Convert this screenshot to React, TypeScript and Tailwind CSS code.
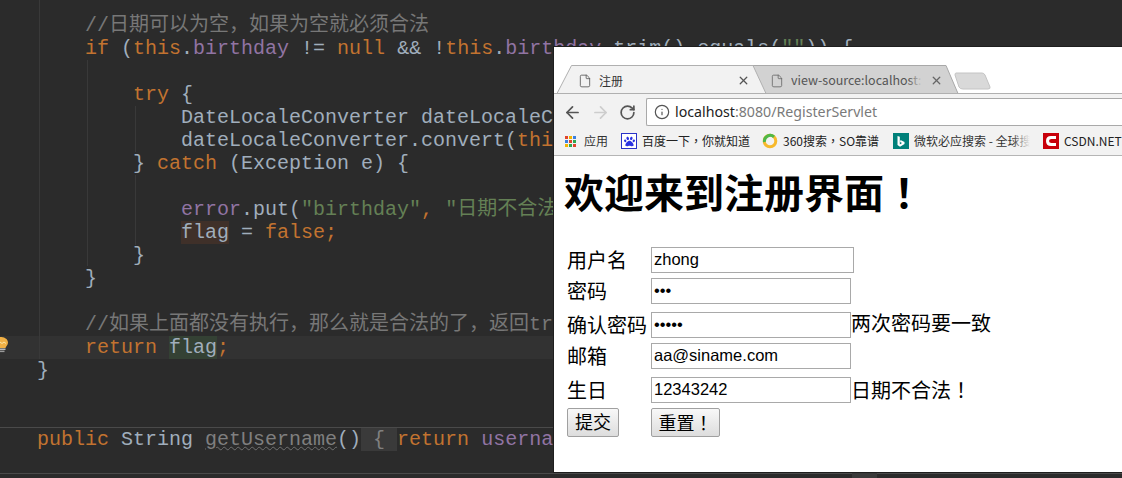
import { ArrowLeft, ArrowRight, RotateCw, Info, File, X } from "lucide-react";
import { FaPaw } from "react-icons/fa";
import type { ReactNode } from "react";

const K = ({ children }: { children: ReactNode }) => <span className="text-[#c27330]">{children}</span>;
const F = ({ children }: { children: ReactNode }) => <span className="text-[#9174a3]">{children}</span>;
const S = ({ children }: { children: ReactNode }) => <span className="text-[#648055]">{children}</span>;
const C = ({ children }: { children: ReactNode }) => <span className="text-[#777777]">{children}</span>;
const Bang = ({ children }: { children: ReactNode }) => <span className="font-['Noto_Sans_CJK_TC',sans-serif]">{children}</span>;

const Line = ({ children, cur }: { children?: ReactNode; cur?: boolean }) => (
  <div className={`h-[23px] leading-[23px] whitespace-pre pl-[37px] ${cur ? "bg-[#323232]" : ""}`}>{children}</div>
);

const Guide = ({ cls }: { cls: string }) => <div className={`absolute w-px bg-[#393939] ${cls}`} />;

function Editor() {
  return (
    <div className="relative h-[478px] w-full overflow-hidden bg-[#2b2b2b] pt-[14px] text-[20px] text-[#a0aebc] font-['Liberation_Mono','Noto_Sans_CJK_SC',monospace]">
      <Guide cls="left-[39px] top-0 h-[359px]" />
      <Guide cls="left-[87px] top-[60px] h-[206px]" />
      <Guide cls="left-[135px] top-[106px] h-[46px]" />
      <Guide cls="left-[135px] top-[175px] h-[70px]" />
      <Line><C>{"    //日期可以为空，如果为空就必须合法"}</C></Line>
      <Line>{"    "}<K>if</K>{" ("}<K>this</K>.<F>birthday</F>{" != "}<K>null</K>{" && !"}<K>this</K>.<F>birthday</F>{".trim().equals("}<S>{'""'}</S>{")) {"}</Line>
      <Line />
      <Line>{"        "}<K>try</K>{" {"}</Line>
      <Line>{"            DateLocaleConverter dateLocaleConverter"}</Line>
      <Line>{"            dateLocaleConverter.convert("}<K>this</K></Line>
      <Line>{"        } "}<K>catch</K>{" (Exception e) {"}</Line>
      <Line />
      <Line>{"            "}<F>error</F>{".put("}<S>{'"birthday"'}</S><K>,</K>{" "}<S>{'"日期不合法！"'}</S>{");"}</Line>
      <Line>{"            "}<span className="bg-[#3f3029]">flag</span>{" = "}<K>false;</K></Line>
      <Line>{"        }"}</Line>
      <Line>{"    }"}</Line>
      <Line />
      <Line><C>{"    //如果上面都没有执行，那么就是合法的了，返回true"}</C></Line>
      <Line cur>{"    "}<K>return</K>{" "}<span className="bg-[#344134]">flag</span><K>;</K></Line>
      <Line>{"}"}</Line>
      <div className="mt-[45px] h-[47px] border-t border-b border-[#4a4a4a] pl-[37px] leading-[23px] whitespace-pre">
        <K>public</K>{" String "}
        <span className="text-[#7f7f7f] underline decoration-wavy decoration-[#707070] decoration-1">getUsername</span>
        {"()"}
        <span className="inline-block h-[23px] bg-[#3a3a3a] text-[#808080]">{" { "}</span>
        <K>return</K>{" "}<F>username</F>
      </div>
      <svg className="absolute left-0 top-[337px]" width="9" height="16" viewBox="0 0 9 16">
        <path d="M-1 0 C4 -0.5 8 2 8 5.5 C8 8 6 9 5.5 11 L-1 11 Z" fill="#f0b045" />
        <path d="M0 5 L2 6.5 L4 5 L6 6.5" stroke="#fff2c0" strokeWidth="0.8" fill="none" />
        <rect x="-1" y="11.5" width="6.5" height="1.5" fill="#b9b9b9" />
        <rect x="-1" y="13.6" width="5.5" height="1.5" fill="#9a9a9a" />
      </svg>
      <div className="absolute left-[852px] bottom-0 h-[5px] w-[25px] bg-[#3a3a3a]" />
    </div>
  );
}

function Tabs() {
  return (
    <div className="relative h-[47px] shrink-0 bg-white">
      <svg className="absolute left-0 top-0" width="568" height="47" viewBox="0 0 568 47">
        <path d="M209 46.5 L194 18.5 L392 18.5 L404 46.5 Z" fill="#d2d2d2" stroke="#a8a8a8" />
        <path d="M3 46.5 L17.5 18.5 L199 18.5 L212 46.5 Z" fill="#f2f2f2" stroke="#b0b0b0" />
        <path d="M402 26 L428 26 Q430 26 431 28 L436 40 Q436.500 42 434 42 L409 42 Q406 42 405 40 L401 28 Q401 26 402 26 Z" fill="#d9d9d9" stroke="#c4c4c4" />
        <path d="M0 46.500 L3 46.500 M212 46.500 L568 46.500" stroke="#b0b0b0" />
      </svg>
      <div className="relative flex h-[47px] items-center pt-[20px]">
        <div className="flex w-[207px] items-center pl-[24px] pr-[11px]">
          <File size={14} strokeWidth={1.4} className="text-[#555]" />
          <span className="ml-[7px] text-[12px] text-[#333]">注册</span>
          <X size={13} strokeWidth={2.4} className="ml-auto text-[#555]" />
        </div>
        <div className="flex w-[185px] items-center pl-[9px]">
          <File size={14} strokeWidth={1.4} className="text-[#666]" />
          <span className="relative ml-[7px] w-[131px] overflow-hidden whitespace-nowrap text-[12.500px] text-[#555]">
            view-source:localhost:8080
            <span className="absolute right-0 top-0 h-full w-[14px] bg-gradient-to-r from-transparent to-[#d2d2d2]" />
          </span>
          <X size={13} strokeWidth={2.4} className="ml-auto mr-[3px] text-[#666]" />
        </div>
      </div>
    </div>
  );
}

function Toolbar() {
  return (
    <div className="flex h-[33px] shrink-0 items-center bg-[#f2f2f2] pb-[1px] pt-[4px]">
      <div className="flex w-[92px] shrink-0 items-center pl-[9px] gap-[9px]">
        <ArrowLeft size={19} strokeWidth={2.2} className="text-[#555]" />
        <ArrowRight size={19} strokeWidth={2.2} className="text-[#cdcdcd]" />
        <RotateCw size={17} strokeWidth={2.4} className="text-[#555]" />
      </div>
      <div className="flex h-[28px] flex-1 items-center rounded-l-[2px] border border-r-0 border-[#a9a9a9] bg-white pl-[7px]">
        <Info size={16} strokeWidth={1.8} className="text-[#555]" />
        <span className="ml-[5px] font-['Noto_Sans',sans-serif] text-[14.200px] text-[#7a7a7a]">
          <span className="text-[#222]">localhost</span>:8080/RegisterServlet
        </span>
      </div>
    </div>
  );
}

function Apps() {
  const c = ["#e0452c", "#f4b400", "#3a7fe0", "#3a7fe0", "#e0452c", "#2fa84f", "#f4b400", "#2fa84f", "#e0452c"];
  return (
    <div className="grid grid-cols-3 gap-px">
      {c.map((x, i) => (
        <div key={i} className="h-[3px] w-[3px]" style={{ background: x }} />
      ))}
    </div>
  );
}

function Bookmarks() {
  return (
    <div className="flex h-[29px] shrink-0 items-center whitespace-nowrap border-b border-[#b5b5b5] bg-[#f2f2f2] pl-[11px] text-[12px] text-[#222]">
      <Apps />
      <span className="ml-[8px] text-[#333]">应用</span>
      <span className="ml-[13px] flex h-[16px] w-[16px] items-center justify-center border border-[#2932c8] bg-white">
        <FaPaw size={11} className="text-[#2932e1]" />
      </span>
      <span className="ml-[5px] w-[120px]">百度一下<Bang>，</Bang>你就知道</span>
      <svg width="16" height="16" viewBox="0 0 16 16">
        <circle cx="8" cy="8" r="5.800" fill="none" stroke="#f7b92b" strokeWidth="3" />
        <path d="M2.500 9 A5.800 5.800 0 0 1 12 3.800" fill="none" stroke="#4fb848" strokeWidth="3" />
      </svg>
      <span className="ml-[5px] w-[110px]">360搜索<Bang>，</Bang>SO靠谱</span>
      <span className="flex h-[16px] w-[16px] items-center justify-center bg-[#00807a]">
        <svg width="10" height="13" viewBox="0 0 10 13">
          <path d="M1.500 1 L1.500 10 L4 11.800 L8.500 9 L8.500 7 L4.500 5 L4 7 L6 8 L3.800 9.500 L3.800 1.800 Z" fill="#fff" />
        </svg>
      </span>
      <span className="relative ml-[5px] w-[116px] overflow-hidden text-[#333]">
        微软必应搜索 - 全球搜索
        <span className="absolute right-0 top-0 h-full w-[18px] bg-gradient-to-r from-transparent to-[#f2f2f2]" />
      </span>
      <span className="ml-[13px] flex h-[16px] w-[16px] items-center justify-center bg-[#c8000b]">
        <svg width="12" height="12" viewBox="0 0 12 12">
          <path d="M11 1 L6 1 Q1 1 1 6 Q1 11 6 11 L11 11 L11 8 L6.500 8 Q4 8 4 6 Q4 4 6.500 4 L11 4 Z" fill="#fff" />
        </svg>
      </span>
      <span className="ml-[5px]">CSDN.NET</span>
    </div>
  );
}

const Label = ({ children }: { children: ReactNode }) => <span className="h-[26px] w-[84px] shrink-0 text-[20px] leading-[28px]">{children}</span>;

const Note = ({ children, cls }: { children: ReactNode; cls: string }) => <span className={`h-[26px] text-[20px] ${cls}`}>{children}</span>;

const Field = ({ w, value, type = "text" }: { w: string; value: string; type?: string }) => (
  <input
    readOnly
    type={type}
    value={value}
    className={`h-[26px] ${w} shrink-0 border border-[#a9a9a9] bg-white px-[2px] pb-[2px] text-[16.500px] text-black outline-none font-['Liberation_Sans',sans-serif]`}
  />
);

function Page() {
  return (
    <div className="flex-1 bg-white pl-[11px] text-black font-['Liberation_Sans','Noto_Sans_CJK_SC',sans-serif]">
      <h1 className="mt-[11px] -ml-[1px] h-[48px] text-[40px] font-bold leading-[48px]">欢迎来到注册界面<Bang>！</Bang></h1>
      <div className="mt-[32px] flex flex-col pl-[2px]">
        <div className="flex h-[26px] items-center"><Label>用户名</Label><Field w="w-[203px]" value="zhong" /></div>
        <div className="mt-[5px] flex h-[26px] items-center"><Label>密码</Label><Field w="w-[200px]" value="abc" type="password" /></div>
        <div className="mt-[8px] flex h-[26px] items-center"><Label>确认密码</Label><Field w="w-[200px]" value="abcde" type="password" /><Note cls="leading-[24px]">两次密码要一致</Note></div>
        <div className="mt-[5px] flex h-[26px] items-center"><Label>邮箱</Label><Field w="w-[200px]" value="aa@siname.com" /></div>
        <div className="mt-[8px] flex h-[26px] items-center"><Label>生日</Label><Field w="w-[200px]" value="12343242" /><Note cls="leading-[25px]">日期不合法<Bang>！</Bang></Note></div>
        <div className="mt-[5px] flex h-[29px] items-center">
          <div className="w-[84px] shrink-0">
            <button className="h-[29px] w-[52px] rounded-[2px] border border-[#a0a0a0] bg-gradient-to-b from-[#f8f8f8] to-[#dddddd] text-[18px] leading-[24px]">提交</button>
          </div>
          <button className="h-[29px] w-[69px] rounded-[2px] border border-[#a0a0a0] bg-gradient-to-b from-[#f8f8f8] to-[#dddddd] text-[18px] leading-[24px]">重置<Bang>！</Bang></button>
        </div>
      </div>
    </div>
  );
}

export default function App() {
  return (
    <div className="relative h-[478px] w-[1122px] overflow-hidden">
      <Editor />
      <div className="absolute left-[553px] top-[46px] flex h-[427px] w-[569px] flex-col border-t border-b border-l border-[#1e1e1e] bg-white font-['Noto_Sans_CJK_SC','Liberation_Sans',sans-serif]">
        <Tabs />
        <Toolbar />
        <Bookmarks />
        <Page />
      </div>
    </div>
  );
}
